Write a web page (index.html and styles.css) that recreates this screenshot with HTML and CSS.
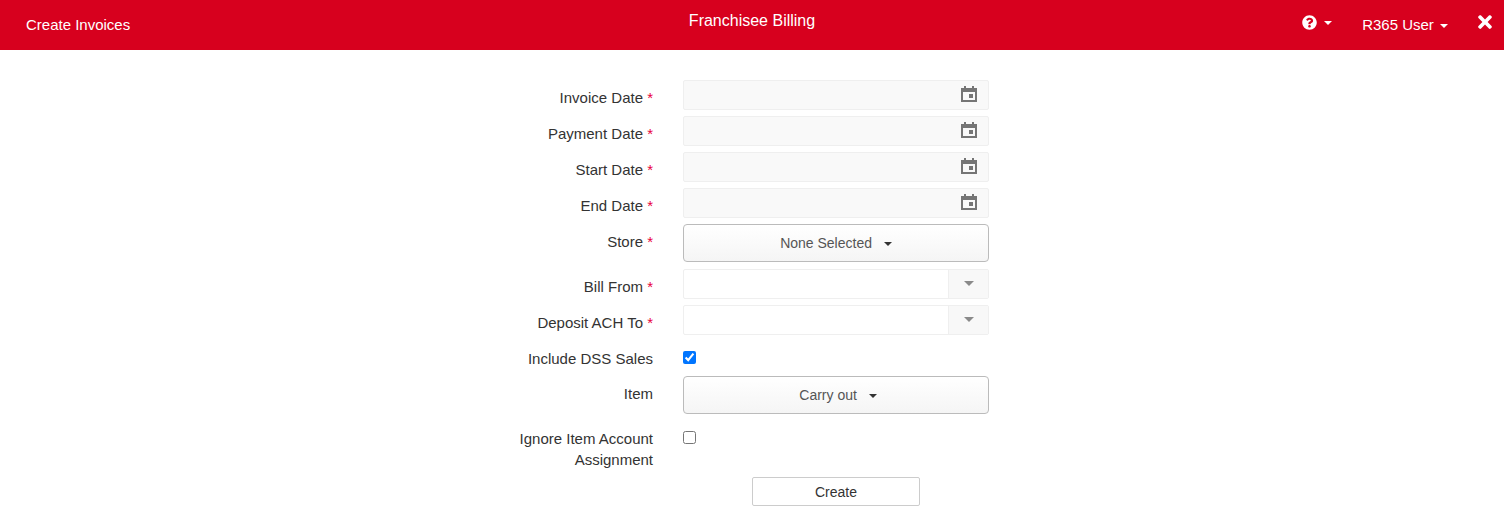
FILE: index.html
```html
<!DOCTYPE html>
<html lang="en">
  <head>
    <meta charset="UTF-8" />
    <title>Franchisee Billing</title>
    <link rel="stylesheet" href="styles.css">
  </head>
  <body>
    <header class="topbar">
      <div class="topbar-left">Create Invoices</div>
      <div class="topbar-title">Franchisee Billing</div>
      <div class="topbar-right">
        <span class="help">
          <svg class="help-icon" viewBox="0 0 512 512"><path d="M504 256c0 136.997-111.043 248-248 248S8 392.997 8 256C8 119.083 119.043 8 256 8s248 111.083 248 248zM262.655 90c-54.497 0-89.255 22.957-116.549 63.758-3.536 5.286-2.353 12.415 2.715 16.258l34.699 26.31c5.205 3.947 12.621 3.008 16.665-2.122 17.864-22.658 30.113-35.797 57.303-35.797 20.429 0 45.698 13.148 45.698 32.958 0 14.976-12.363 22.667-32.534 33.976C247.128 238.528 216 254.941 216 296v4c0 6.627 5.373 12 12 12h56c6.627 0 12-5.373 12-12v-1.333c0-28.462 83.186-29.647 83.186-106.667 0-58.002-60.165-102-116.531-102zM256 338c-25.365 0-46 20.635-46 46 0 25.364 20.635 46 46 46s46-20.636 46-46c0-25.365-20.635-46-46-46z"/></svg>
          <span class="caret"></span>
        </span>
        <span class="user">R365 User <span class="caret"></span></span>
        <svg class="close-icon" viewBox="0 0 352 512"><path d="M242.72 256l100.07-100.07c12.28-12.28 12.28-32.19 0-44.48l-22.24-22.24c-12.28-12.28-32.19-12.28-44.48 0L176 189.28 75.93 89.21c-12.28-12.28-32.19-12.28-44.48 0L9.21 111.45c-12.28 12.28-12.28 32.19 0 44.48L109.28 256 9.21 356.07c-12.28 12.28-12.28 32.19 0 44.48l22.24 22.24c12.28 12.28 32.2 12.28 44.48 0L176 322.72l100.07 100.07c12.28 12.28 32.2 12.28 44.48 0l22.24-22.24c12.28-12.28 12.28-32.19 0-44.48L242.72 256z"/></svg>
      </div>
    </header>

    <form class="form">
      <div class="row">
        <label class="label">Invoice Date <span class="req">*</span></label>
        <div class="date-input"><svg class="cal" viewBox="0 0 16 16"><path fill-rule="evenodd" d="M0 2h3V0h2v2h6V0h2v2h3v14H0zM2 6v8h12V6zM8 8h4v4H8z"/></svg></div>
      </div>
      <div class="row">
        <label class="label">Payment Date <span class="req">*</span></label>
        <div class="date-input"><svg class="cal" viewBox="0 0 16 16"><path fill-rule="evenodd" d="M0 2h3V0h2v2h6V0h2v2h3v14H0zM2 6v8h12V6zM8 8h4v4H8z"/></svg></div>
      </div>
      <div class="row">
        <label class="label">Start Date <span class="req">*</span></label>
        <div class="date-input"><svg class="cal" viewBox="0 0 16 16"><path fill-rule="evenodd" d="M0 2h3V0h2v2h6V0h2v2h3v14H0zM2 6v8h12V6zM8 8h4v4H8z"/></svg></div>
      </div>
      <div class="row">
        <label class="label">End Date <span class="req">*</span></label>
        <div class="date-input"><svg class="cal" viewBox="0 0 16 16"><path fill-rule="evenodd" d="M0 2h3V0h2v2h6V0h2v2h3v14H0zM2 6v8h12V6zM8 8h4v4H8z"/></svg></div>
      </div>
      <div class="row row-select">
        <label class="label">Store <span class="req">*</span></label>
        <button type="button" class="multi">None Selected <span class="caret"></span></button>
      </div>
      <div class="row">
        <label class="label">Bill From <span class="req">*</span></label>
        <div class="combo"><span class="combo-btn"><span class="combo-arrow"></span></span></div>
      </div>
      <div class="row">
        <label class="label">Deposit ACH To <span class="req">*</span></label>
        <div class="combo"><span class="combo-btn"><span class="combo-arrow"></span></span></div>
      </div>
      <div class="row row-check">
        <label class="label">Include DSS Sales</label>
        <input type="checkbox" class="check" checked>
      </div>
      <div class="row row-select">
        <label class="label">Item</label>
        <button type="button" class="multi multi-item">Carry out <span class="caret"></span></button>
      </div>
      <div class="row row-check row-tall">
        <label class="label">Ignore Item Account Assignment</label>
        <input type="checkbox" class="check">
      </div>
      <div class="actions">
        <button type="button" class="create">Create</button>
      </div>
    </form>
  </body>
</html>
```

FILE: styles.css
```css
* {
  margin: 0;
  padding: 0;
  box-sizing: border-box;
}

html,
body {
  height: 100%;
  overflow: hidden;
}

body {
  font-family: "Liberation Sans", Arial, sans-serif;
  font-size: 15px;
  line-height: 21px;
  color: #333;
  background: #fff;
}

.topbar {
  height: 50px;
  background: #d7001e;
  color: #fff;
  display: grid;
  grid-template-columns: 1fr auto 1fr;
  padding: 0 12px;
}

.topbar-left {
  padding: 14px 0 0 14px;
}

.topbar-title {
  padding-top: 10px;
  font-size: 16px;
}

.topbar-right {
  display: flex;
  justify-content: flex-end;
  align-items: flex-start;
}

.help {
  display: flex;
  align-items: center;
  padding-top: 15px;
  margin-right: 30px;
}

.help-icon {
  width: 15px;
  height: 15px;
  fill: #fff;
  margin-right: 3px;
}

.user {
  padding-top: 14px;
  margin-right: 30px;
}

.user .caret {
  margin-left: 2px;
}

.close-icon {
  width: 14px;
  height: 20px;
  margin-top: 12px;
  fill: #fff;
}

.caret {
  display: inline-block;
  width: 0;
  height: 0;
  margin-left: 4px;
  vertical-align: middle;
  border-top: 4px solid;
  border-left: 4px solid transparent;
  border-right: 4px solid transparent;
}

.form {
  width: 503px;
  margin: 30px 0 0 501px;
}

.row {
  display: flex;
  align-items: flex-start;
  margin-bottom: 6px;
}

.label {
  width: 167px;
  flex: none;
  padding: 7px 15px 0 0;
  text-align: right;
}

.req {
  color: #e8003d;
}

.date-input,
.combo,
.multi {
  width: 306px;
  margin-left: 15px;
}

.date-input {
  height: 30px;
  background: #f9f9f9;
  border: 1px solid #efefef;
  border-radius: 2px;
  display: flex;
  justify-content: flex-end;
  padding: 5px 11px 0 0;
}

.cal {
  width: 16px;
  height: 16px;
  fill: #757575;
}

.combo {
  height: 30px;
  background: #fff;
  border: 1px solid #efefef;
  border-radius: 2px;
  display: flex;
  justify-content: flex-end;
}

.combo-btn {
  width: 40px;
  background: #f8f8f8;
  border-left: 1px solid #efefef;
  display: flex;
  justify-content: center;
  padding-top: 11px;
}

.combo-arrow {
  width: 0;
  height: 0;
  border-top: 5px solid #8a8a8a;
  border-left: 5px solid transparent;
  border-right: 5px solid transparent;
}

.row-select {
  margin-bottom: 7px;
}

.multi {
  height: 38px;
  font: inherit;
  font-size: 14px;
  color: #555;
  background: linear-gradient(#fff, #f5f5f5);
  border: 1px solid #bbb;
  border-radius: 4px;
}

.multi-item {
  padding-left: 4px;
}

.multi .caret {
  color: #333;
  margin-left: 8px;
}

.row-check {
  margin-top: 16px;
  margin-bottom: 11px;
  height: 14px;
}

.row-check .label {
  padding-top: 0;
  margin-top: -3px;
}

.check {
  margin: 0 0 0 15px;
  width: 13px;
  height: 13px;
}

.row-tall {
  height: 35px;
  margin-top: 17px;
}

.actions {
  margin-left: 251px;
}

.create {
  display: block;
  width: 168px;
  height: 29px;
  padding-top: 2px;
  font: inherit;
  font-size: 14px;
  color: #333;
  background: #fff;
  border: 1px solid #ccc;
  border-radius: 2px;
}
```
